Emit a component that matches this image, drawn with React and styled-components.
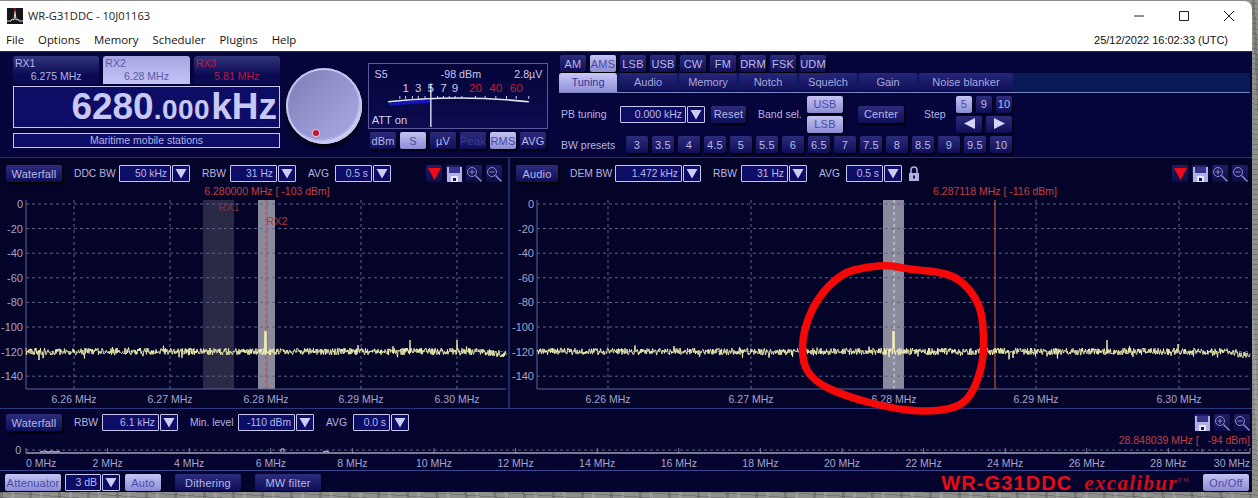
import React from "react";
import styled, { createGlobalStyle, css } from "styled-components";

const GlobalStyle = createGlobalStyle`
  html, body { margin: 0; padding: 0; background: #8b8b88; }
  body { font-family: "Liberation Sans", Arial, sans-serif; overflow: hidden; }
  * { box-sizing: border-box; }
`;

const modes = ["AM", "AMS", "LSB", "USB", "CW", "FM", "DRM", "FSK", "UDM"];
const tabs = ["Tuning", "Audio", "Memory", "Notch", "Squelch", "Gain", "Noise blanker"];
const presets = ["3", "3.5", "4", "4.5", "5", "5.5", "6", "6.5", "7", "7.5", "8", "8.5", "9", "9.5", "10"];
const menu = ["File", "Options", "Memory", "Scheduler", "Plugins", "Help"];
const levels = [0, -20, -40, -60, -80, -100, -120, -140];

function rng(seed) {
  let s = seed;
  return () => {
    s = (s + 0x6d2b79f5) | 0;
    let t = Math.imul(s ^ (s >>> 15), 1 | s);
    t = (t + Math.imul(t ^ (t >>> 7), 61 | t)) ^ t;
    return ((t ^ (t >>> 14)) >>> 0) / 4294967296;
  };
}

// noise floor at -120 dBm, spikes are [x, y]
function trace(seed, from, to, base, spikes, droop = 0) {
  const r = rng(seed);
  const pts = [];
  for (let x = from; x <= to; x += 0.5) {
    let y = base + (r() - 0.5) * 7 + (r() > 0.93 ? (r() - 0.4) * 9 : 0);
    if (x > to - 25) y += droop * ((x - to + 25) / 25);
    const hit = spikes.find((s) => s[0] === x);
    if (hit) y = hit[1];
    pts.push(`${x},${y.toFixed(1)}`);
  }
  return pts.join(" ");
}

function smooth(p) {
  const mid = (a, b) => [(a[0] + b[0]) / 2, (a[1] + b[1]) / 2];
  const start = mid(p[p.length - 1], p[0]);
  let d = `M${start[0]} ${start[1]}`;
  p.forEach((pt, i) => {
    const m = mid(pt, p[(i + 1) % p.length]);
    d += ` Q${pt[0]} ${pt[1]} ${m[0]} ${m[1]}`;
  });
  return d + "Z";
}

const Page = styled.div`
  position: relative;
  width: 1258px;
  height: 498px;
  overflow: hidden;
  background:
    repeating-linear-gradient(87deg, rgba(40, 40, 40, 0.22) 0 3px, transparent 3px 11px, rgba(220, 220, 220, 0.18) 11px 14px, transparent 14px 29px),
    repeating-linear-gradient(4deg, rgba(30, 30, 30, 0.2) 0 1px, transparent 1px 5px),
    #8f8f8c;
`;

const Win = styled.div`
  position: relative;
  width: 1252px;
  height: 492px;
  display: flex;
  flex-direction: column;
  border-top: 1px solid #8c8c8c;
  border-top-right-radius: 8px;
  overflow: hidden;
  background: #fff;
`;

const TitleBar = styled.div`
  height: 27px;
  display: flex;
  align-items: center;
  padding: 2px 0 0 7px;
  font-family: "Open Sans", sans-serif;
  font-size: 11.2px;
  color: #222;
`;

const TitleText = styled.span`
  margin-left: 5px;
`;

const WinControls = styled.div`
  margin-left: auto;
  margin-right: 13px;
  display: flex;
  gap: 25px;
  color: #222;
`;

const MenuBar = styled.div`
  height: 23px;
  display: flex;
  align-items: center;
  padding: 0 24px 0 6px;
  font-family: "Open Sans", sans-serif;
  font-size: 11.4px;
  color: #111;
  gap: 14px;
`;

const Clock = styled.span`
  margin-left: auto;
  font-family: "Liberation Sans", sans-serif;
  font-size: 11px;
`;

const Body = styled.div`
  flex: 1;
  background: #04042e;
  color: #b4b4e4;
  font-size: 10.5px;
  display: flex;
  flex-direction: column;
  border-top: 1px solid #24246a;
`;

const TopPanel = styled.div`
  height: 106px;
  display: flex;
  background: #05053c;
  border-bottom: 1px solid #22307a;
`;

const RxColumn = styled.div`
  width: 267px;
  margin: 4px 0 0 13px;
  display: flex;
  flex-direction: column;
`;

const RxRow = styled.div`
  display: flex;
  gap: 4px;
  height: 28px;
`;

const rxTabColors = {
  on: css`
    background: linear-gradient(#a6a6e4, #c4c4f6);
    color: #5a5aa8;
  `,
  off: css`
    background: linear-gradient(#33337c, #0a0a52 70%);
    color: #b4b4e4;
  `,
  muted: css`
    background: linear-gradient(#33337c, #0a0a52 70%);
    color: #c8123a;
  `,
};

const RxTab = styled.div`
  flex: 1;
  border-radius: 3px 3px 0 0;
  padding: 1px 2px;
  display: flex;
  flex-direction: column;
  font-size: 10.5px;
  line-height: 13px;
  ${(p) => rxTabColors[p.$kind]}
`;

const RxFreq = styled.span`
  text-align: center;
`;

const FreqBox = styled.div`
  height: 42px;
  margin-top: 2px;
  border: 1px solid #c6c6f0;
  background: #0d0d66;
  color: #c8c8f4;
  font-weight: 700;
  display: flex;
  justify-content: flex-end;
  align-items: baseline;
  padding-right: 2px;
  line-height: 40px;
`;

const FreqBig = styled.span`
  font-size: 37px;
`;

const FreqSmall = styled.span`
  font-size: 28px;
  letter-spacing: 0.5px;
  margin-right: 1px;
`;

const StationBox = styled.div`
  height: 15px;
  margin-top: 5px;
  border: 1px solid #c6c6f0;
  background: #0d0d66;
  color: #b4b4e4;
  font-size: 10.5px;
  line-height: 13px;
  text-align: center;
`;

const Knob = styled.div`
  position: relative;
  flex: none;
  width: 76px;
  height: 76px;
  margin: 16px 0 0 6px;
  border-radius: 50%;
  background: linear-gradient(135deg, #7c7cb6, #9e9ed8 70%, #aaaae4);
  box-shadow: inset 0 0 0 2px #c4c4f0, inset -2px -3px 3px #e0e0ff, 0 3px 5px #000;
`;

const KnobDot = styled.span`
  position: absolute;
  left: 27px;
  top: 62px;
  width: 6px;
  height: 6px;
  border-radius: 50%;
  background: #c01838;
  box-shadow: 0 0 0 1px #e8b8d0;
`;

const MeterColumn = styled.div`
  width: 180px;
  margin: 11px 0 0 6px;
  display: flex;
  flex-direction: column;
`;

const MeterFace = styled.svg`
  display: block;
  width: 180px;
  height: 66px;
  border: 1px solid #5a5a9c;
  background: linear-gradient(#04043a, #0c0c50);
  font-family: "Liberation Sans", sans-serif;
`;

const MeterButtons = styled.div`
  display: flex;
  gap: 4px;
  margin: 3px 0 0 2px;
`;

const Btn = styled.button`
  appearance: none;
  flex: none;
  width: ${(p) => p.$w || 26}px;
  height: ${(p) => p.$h || 17}px;
  padding: 0;
  border: 0;
  border-radius: 2px;
  font: inherit;
  font-size: 11px;
  letter-spacing: 0.2px;
  white-space: nowrap;
  color: #b8b8e8;
  background: linear-gradient(#2c2c7c, #0e0e58);
  box-shadow: 1px 2px 2px #000;
  ${(p) =>
    p.$on &&
    css`
      color: #4a4aa4;
      background: linear-gradient(#c4c4f4, #8c8cd4);
    `}
  ${(p) =>
    p.$faint &&
    css`
      color: #3c3c8c;
    `}
`;

const ControlColumn = styled.div`
  flex: 1;
  margin: 3px 2px 0 11px;
  display: flex;
  flex-direction: column;
`;

const ModeRow = styled.div`
  display: flex;
  gap: 4px;
  padding-left: 1px;
`;

const TabBand = styled.div`
  display: flex;
  gap: 2px;
  height: 20px;
  margin-top: 1px;
  background: #0a1a58;
  border-bottom: 1px solid #7c84c0;
`;

const Tab = styled.div`
  width: ${(p) => p.$w}px;
  border-radius: 3px 3px 0 0;
  text-align: center;
  font-size: 11px;
  line-height: 19px;
  color: #a8a8dc;
  background: linear-gradient(#26267a, #0e0e56);
  ${(p) =>
    p.$on &&
    css`
      color: #34349a;
      background: linear-gradient(#c8c8f6, #9090d8);
    `}
`;

const TuneRow = styled.div`
  display: flex;
  align-items: center;
  height: 36px;
  margin-top: 3px;
  padding-left: 2px;
`;

const Label = styled.span`
  flex: none;
  width: ${(p) => p.$w}px;
  margin-left: ${(p) => p.$ml || 0}px;
  white-space: nowrap;
`;

const Field = styled.div`
  flex: none;
  width: ${(p) => p.$w}px;
  height: 17px;
  border: 1px solid #c6c6f0;
  border-radius: 1px;
  background: #0d0d66;
  color: #b8b8e8;
  line-height: 15px;
  text-align: right;
  white-space: nowrap;
  padding-right: 3px;
`;

const ArrowBox = styled.div`
  flex: none;
  width: 18px;
  height: 17px;
  margin-left: 1px;
  border: 1px solid #c6c6f0;
  border-radius: 1px;
  background: #0d0d66;
  display: flex;
  align-items: center;
  justify-content: center;
`;

const Spaced = styled.div`
  margin-left: ${(p) => p.$ml}px;
`;

const BandStack = styled.div`
  display: flex;
  flex-direction: column;
  gap: 3px;
`;

const StepGrid = styled.div`
  width: 56px;
  display: flex;
  flex-wrap: wrap;
  gap: 3px 4px;
`;

const PresetRow = styled.div`
  display: flex;
  align-items: center;
  gap: 4px;
  height: 17px;
  margin-top: 4px;
  padding-left: 2px;
`;

const SpectrumRow = styled.div`
  height: 250px;
  display: flex;
`;

const SpectrumPanel = styled.div`
  width: ${(p) => p.$w}px;
  flex: none;
  display: flex;
  flex-direction: column;
  background: #040428;
  ${(p) => p.$divided && "border-left: 2px solid #1c2a6c;"}
`;

const Toolbar = styled.div`
  display: flex;
  align-items: center;
  height: 17px;
  margin-top: ${(p) => p.$top}px;
  padding: 0 ${(p) => p.$pr || 6}px 0 6px;
  gap: 12px;
  font-size: 10.3px;
`;

const Group = styled.div`
  display: flex;
  align-items: center;
`;

const LabelGap = styled(Label)`
  margin-right: 4px;
`;

const Tools = styled.div`
  margin-left: auto;
  display: flex;
  gap: 4px;
`;

const Tool = styled.div`
  width: 16px;
  height: 17px;
  display: flex;
  align-items: center;
  justify-content: center;
  background: linear-gradient(#1e1e68, #0c0c48);
  border-radius: 2px;
`;

const Lock = styled.div`
  margin-left: -6px;
  display: flex;
`;

const Chart = styled.svg`
  display: block;
  margin-top: ${(p) => p.$top}px;
  font-family: "Liberation Sans", sans-serif;
  text {
    white-space: pre;
  }
`;

const BottomPanel = styled.div`
  height: 62px;
  display: flex;
  flex-direction: column;
  background: #04042e;
  border-top: 1px solid #2a3880;
`;

const Footer = styled.div`
  flex: 1;
  display: flex;
  align-items: flex-start;
  padding: 3px 3px 0 5px;
  background: #04042e;
  border-top: 1px solid #3a4690;
`;

const Logo = styled.span`
  margin-left: auto;
  color: #e80c18;
  font-size: 20px;
  line-height: 18px;
  font-weight: 700;
  letter-spacing: 1.1px;
  white-space: nowrap;
`;

const LogoScript = styled.span`
  flex: none;
  margin: 0 13px 0 12px;
  color: #d00c18;
  font-family: "Liberation Serif", serif;
  font-size: 21px;
  line-height: 18px;
  font-style: italic;
  font-weight: 700;
  letter-spacing: 1.3px;
  white-space: nowrap;
`;

const Trade = styled.sup`
  font-size: 6px;
  font-style: normal;
  color: #802040;
  vertical-align: 8px;
  line-height: 0;
`;

const Scribble = styled.svg`
  position: absolute;
  left: 0;
  top: 0;
  width: 1252px;
  height: 492px;
  pointer-events: none;
`;

const DownArrow = () => (
  <svg width="12" height="11" viewBox="0 0 12 11">
    <path d="M0.5 1h11L6 10.5z" fill="#ccccf6" />
  </svg>
);

const RedDown = () => (
  <svg width="13" height="12" viewBox="0 0 13 12">
    <path d="M0 0h13L6.5 12z" fill="#f20a14" />
  </svg>
);

const Floppy = () => (
  <svg width="15" height="16" viewBox="0 0 15 16">
    <path d="M0 1h15v15H0z" fill="#b0b0e4" />
    <path d="M2 1h11v6H2z" fill="#343488" />
    <path d="M4 10h7v6H4z" fill="#e8e8ff" />
    <path d="M6 12h3v3H6z" fill="#14145a" />
  </svg>
);

const Zoom = ({ plus }) => (
  <svg width="16" height="16" viewBox="0 0 16 16" fill="none" stroke="#8c8cc8" strokeWidth="1">
    <circle cx="6" cy="6" r="4.5" />
    <path d="M3.5 6h5" />
    {plus && <path d="M6 3.5v5" />}
    <path d="M9.5 9.5L15.5 15.5" strokeWidth="1.4" />
  </svg>
);

const Padlock = () => (
  <svg width="12" height="16" viewBox="0 0 12 16">
    <path d="M3 7V4a3 3 0 0 1 6 0v3" fill="none" stroke="#b0b0e4" strokeWidth="1.6" />
    <path d="M1 7h10v8H1z" fill="#b0b0e4" />
    <path d="M5 9.5h2v3H5z" fill="#14145a" />
  </svg>
);

const WindowGlyph = ({ d }) => (
  <svg width="20" height="12" viewBox="0 0 20 12" fill="none" stroke="#222" strokeWidth="1">
    <path d={d} />
  </svg>
);

const FieldArrow = ({ w, value }) => (
  <>
    <Field $w={w}>{value}</Field>
    <ArrowBox>
      <DownArrow />
    </ArrowBox>
  </>
);

const Setting = ({ label, labelW, w, value }) => (
  <Group>
    <LabelGap $w={labelW}>{label}</LabelGap>
    <FieldArrow w={w} value={value} />
  </Group>
);

const ToolIcons = ({ red }) => (
  <Tools>
    {red && (
      <Tool>
        <RedDown />
      </Tool>
    )}
    <Tool>
      <Floppy />
    </Tool>
    <Tool>
      <Zoom plus />
    </Tool>
    <Tool>
      <Zoom />
    </Tool>
  </Tools>
);

const Meter = () => (
  <MeterFace viewBox="0 0 180 66">
    <text x="4" y="14" fontSize="11" fill="#c8c8f0">S5</text>
    <text x="93" y="14" fontSize="11" fill="#c8c8f0" textAnchor="middle">-98 dBm</text>
    <text x="177" y="14" fontSize="11" fill="#c8c8f0" textAnchor="end">2.8µV</text>
    {[["1", 36], ["3", 49], ["5", 62], ["7", 75], ["9", 87]].map(([t, x]) => (
      <text key={t} x={x} y="29" fontSize="12" fill="#c8c8f0" textAnchor="middle">{t}</text>
    ))}
    {[["20", 108], ["40", 129], ["60", 150]].map(([t, x]) => (
      <text key={t} x={x} y="29" fontSize="12" fill="#d01830" textAnchor="middle">{t}</text>
    ))}
    <path d="M18 39Q90 31 163 39" fill="none" stroke="#e4e4f4" strokeWidth="1.6" />
    <path d="M18 40.5Q40 37 62 36.5L62 40Q40 41 20 43z" fill="#1414c0" />
    {[30, 36, 43, 49, 56, 69, 75, 81, 87, 94, 108, 118, 129, 140, 150, 163].map((x) => (
      <path key={x} d={`M${x} 33v3`} stroke="#d8d8f0" strokeWidth="1" />
    ))}
    <path d="M62 20V65" stroke="#e8e8f8" strokeWidth="1.4" />
    <text x="1" y="62" fontSize="11.5" fill="#d0d0f0">ATT on</text>
  </MeterFace>
);

const Spectrum = ({ width, left, right, ticks, bands, line, cursorX, cursorText, seed, spikes, marks, droop }) => {
  const top = 16;
  const bottom = 205;
  const levelY = (i) => 20 + i * 24.6;
  return (
    <Chart width={width} height={224} $top={2}>
      <text x={cursorX} y="11" fontSize="10.5" fill="#c04044" textAnchor="middle">{cursorText}</text>
      {bands.map((b) => (
        <rect key={b.x} x={b.x} y={top} width={b.w} height={bottom - top} fill={b.fill} />
      ))}
      {levels.map((lv, i) => (
        <g key={lv}>
          <path d={`M${left} ${levelY(i)}H${right}`} stroke="#5c6488" strokeDasharray="3 3" />
          <text x={left - 3} y={levelY(i) + 4} fontSize="11" fill="#a4a4cc" textAnchor="end">{lv}</text>
        </g>
      ))}
      {ticks.map((t) => (
        <g key={t.x}>
          <path d={`M${t.x} ${top}V${bottom}`} stroke={t.center ? "#dcdce8" : "#5c6488"} strokeDasharray="3 3" />
          <text x={t.x} y="219" fontSize="10.5" fill="#a4a4d0" textAnchor="middle">{t.label}</text>
        </g>
      ))}
      <path d={`M${left} ${top}V${bottom}H${right}`} fill="none" stroke="#5a64a0" />
      {line && <path d={`M${line.x} ${top}V${bottom}`} stroke={line.color} />}
      {marks}
      <polyline points={trace(seed, left, right, 167.5, spikes, droop)} fill="none" stroke="#f6f6b4" strokeWidth="0.9" />
    </Chart>
  );
};

const hfTicks = Array.from({ length: 16 }, (_, i) => 26 + i * 81.6);

const Wideband = () => (
  <Chart width={1252} height={36} $top={3}>
    <text x="1250" y="10" fontSize="10.5" fill="#c04044" textAnchor="end">28.848039 MHz [   -94 dBm]</text>
    <text x="21" y="20" fontSize="10.5" fill="#a4a4cc" textAnchor="end">0</text>
    <path d="M26 16H1250" stroke="#5c6488" strokeDasharray="3 3" />
    {hfTicks.map((x, i) => (
      <g key={x}>
        <path d={`M${x} 14v5`} stroke="#6c74a0" />
        <text
          x={i === 0 ? 26 : i === 15 ? 1250 : x}
          y="33"
          fontSize="10.5"
          fill="#a4a4d0"
          textAnchor={i === 0 ? "start" : i === 15 ? "end" : "middle"}
        >
          {i * 2} MHz
        </text>
      </g>
    ))}
    <path d="M1202 15v3" stroke="#c06040" />
    <path d="M26 19H1250" stroke="#ececf4" strokeWidth="1.2" />
    <path d="M40 18l4 -1 4 1 4 -1 4 1 4 -1M281 18v-3h3v3M323 18l3 -1 3 1" fill="none" stroke="#d0d0e0" />
  </Chart>
);

const scribble = [
  [890, 264], [906, 268], [950, 272], [969, 287], [981, 307], [984, 335], [983, 362], [973, 392],
  [958, 407], [925, 411], [890, 407], [845, 395], [815, 381], [802, 362], [803, 330], [817, 297], [842, 272], [866, 266],
];

export default function App() {
  return (
    <>
      <GlobalStyle />
      <Page>
        <Win>
          <TitleBar>
            <svg width="16" height="16" viewBox="0 0 16 16">
              <path d="M0 0h16v16H0z" fill="#14141c" />
              <path d="M0 13h4l1-2 2 1 1-9 1 9 2-1 1 2h4" fill="none" stroke="#d8d8d0" strokeWidth="1" />
              <path d="M8 0v5" stroke="#c82020" strokeWidth="1" />
            </svg>
            <TitleText>WR-G31DDC - 10J01163</TitleText>
            <WinControls>
              <WindowGlyph d="M5 6h10" />
              <WindowGlyph d="M5.5 1.5h9v9h-9z" />
              <WindowGlyph d="M5 1l10 10M15 1L5 11" />
            </WinControls>
          </TitleBar>
          <MenuBar>
            {menu.map((m) => (
              <span key={m}>{m}</span>
            ))}
            <Clock>25/12/2022 16:02:33 (UTC)</Clock>
          </MenuBar>
          <Body>
            <TopPanel>
              <RxColumn>
                <RxRow>
                  <RxTab $kind="off">
                    RX1
                    <RxFreq>6.275 MHz</RxFreq>
                  </RxTab>
                  <RxTab $kind="on">
                    RX2
                    <RxFreq>6.28 MHz</RxFreq>
                  </RxTab>
                  <RxTab $kind="muted">
                    RX3
                    <RxFreq>5.81 MHz</RxFreq>
                  </RxTab>
                </RxRow>
                <FreqBox>
                  <FreqBig>6280</FreqBig>
                  <FreqSmall>.000</FreqSmall>
                  <FreqBig>kHz</FreqBig>
                </FreqBox>
                <StationBox>Maritime mobile stations</StationBox>
              </RxColumn>
              <Knob>
                <KnobDot />
              </Knob>
              <MeterColumn>
                <Meter />
                <MeterButtons>
                  <Btn>dBm</Btn>
                  <Btn $on>S</Btn>
                  <Btn>µV</Btn>
                  <Btn $faint>Peak</Btn>
                  <Btn $on>RMS</Btn>
                  <Btn>AVG</Btn>
                </MeterButtons>
              </MeterColumn>
              <ControlColumn>
                <ModeRow>
                  {modes.map((m) => (
                    <Btn key={m} $on={m === "AMS"}>
                      {m}
                    </Btn>
                  ))}
                </ModeRow>
                <TabBand>
                  {tabs.map((t, i) => (
                    <Tab key={t} $w={i === 6 ? 94 : 58} $on={i === 0}>
                      {t}
                    </Tab>
                  ))}
                </TabBand>
                <TuneRow>
                  <Label $w={59}>PB tuning</Label>
                  <FieldArrow w={66} value="0.000 kHz" />
                  <Spaced $ml={6}>
                    <Btn $w={35}>Reset</Btn>
                  </Spaced>
                  <Label $w={49} $ml={12}>
                    Band sel.
                  </Label>
                  <BandStack>
                    <Btn $w={36} $on>
                      USB
                    </Btn>
                    <Btn $w={36} $on>
                      LSB
                    </Btn>
                  </BandStack>
                  <Spaced $ml={15}>
                    <Btn $w={46}>Center</Btn>
                  </Spaced>
                  <Label $w={32} $ml={20}>
                    Step
                  </Label>
                  <StepGrid>
                    <Btn $w={16} $on>
                      5
                    </Btn>
                    <Btn $w={16}>9</Btn>
                    <Btn $w={16}>10</Btn>
                    <Btn $w={26}>
                      <svg width="11" height="11" viewBox="0 0 11 11">
                        <path d="M11 0v11L0 5.5z" fill="#d4d4fa" />
                      </svg>
                    </Btn>
                    <Btn $w={26}>
                      <svg width="11" height="11" viewBox="0 0 11 11">
                        <path d="M0 0v11L11 5.5z" fill="#d4d4fa" />
                      </svg>
                    </Btn>
                  </StepGrid>
                </TuneRow>
                <PresetRow>
                  <Label $w={61}>BW presets</Label>
                  {presets.map((p) => (
                    <Btn key={p} $w={22}>
                      {p}
                    </Btn>
                  ))}
                </PresetRow>
              </ControlColumn>
            </TopPanel>

            <SpectrumRow>
              <SpectrumPanel $w={508}>
                <Toolbar $top={7}>
                  <Btn $w={56}>Waterfall</Btn>
                  <Setting label="DDC BW" labelW={41} w={52} value="50 kHz" />
                  <Setting label="RBW" labelW={24} w={47} value="31 Hz" />
                  <Setting label="AVG" labelW={23} w={37} value="0.5 s" />
                  <ToolIcons red />
                </Toolbar>
                <Spectrum
                  width={508}
                  left={26}
                  right={506}
                  cursorX={267}
                  cursorText="6.280000 MHz [ -103 dBm]"
                  bands={[
                    { x: 203, w: 31, fill: "#2a2a46" },
                    { x: 258, w: 17, fill: "#8a8a9c" },
                  ]}
                  line={{ x: 267, color: "#c05a50" }}
                  ticks={[
                    { x: 74, label: "6.26 MHz" },
                    { x: 170, label: "6.27 MHz" },
                    { x: 266, label: "6.28 MHz" },
                    { x: 361, label: "6.29 MHz" },
                    { x: 457, label: "6.30 MHz" },
                  ]}
                  seed={7}
                  spikes={[[39, 176], [265, 147], [266, 147], [410, 156], [457, 156]]}
                  droop={3}
                  marks={
                    <>
                      <text x="229" y="27" fontSize="11" fill="#7a3040" textAnchor="middle">RX1</text>
                      <text x="277" y="41" fontSize="11" fill="#b03c40" textAnchor="middle">RX2</text>
                    </>
                  }
                />
              </SpectrumPanel>
              <SpectrumPanel $w={744} $divided>
                <Toolbar $top={7} $pr={4}>
                  <Btn $w={42}>Audio</Btn>
                  <Setting label="DEM BW" labelW={41} w={67} value="1.472 kHz" />
                  <Setting label="RBW" labelW={24} w={47} value="31 Hz" />
                  <Setting label="AVG" labelW={23} w={37} value="0.5 s" />
                  <Lock>
                    <Padlock />
                  </Lock>
                  <ToolIcons red />
                </Toolbar>
                <Spectrum
                  width={742}
                  left={27}
                  right={740}
                  cursorX={485}
                  cursorText="6.287118 MHz [ -116 dBm]"
                  bands={[{ x: 373, w: 21, fill: "#8a8a9c" }]}
                  line={{ x: 485, color: "#d8683c" }}
                  ticks={[
                    { x: 98, label: "6.26 MHz" },
                    { x: 241, label: "6.27 MHz" },
                    { x: 384, label: "6.28 MHz", center: true },
                    { x: 526, label: "6.29 MHz" },
                    { x: 669, label: "6.30 MHz" },
                  ]}
                  seed={21}
                  spikes={[[383, 147], [384, 147], [597, 156], [668, 160]]}
                  droop={5}
                />
              </SpectrumPanel>
            </SpectrumRow>

            <BottomPanel>
              <Toolbar $top={5} $pr={2}>
                <Btn $w={56}>Waterfall</Btn>
                <Setting label="RBW" labelW={24} w={57} value="6.1 kHz" />
                <Setting label="Min. level" labelW={44} w={57} value="-110 dBm" />
                <Setting label="AVG" labelW={23} w={37} value="0.0 s" />
                <ToolIcons />
              </Toolbar>
              <Wideband />
            </BottomPanel>

            <Footer>
              <Btn $w={56} $on>
                Attenuator
              </Btn>
              <Spaced $ml={4}>
                <Group>
                  <FieldArrow w={36} value="3 dB" />
                </Group>
              </Spaced>
              <Spaced $ml={5}>
                <Btn $w={36} $on>
                  Auto
                </Btn>
              </Spaced>
              <Spaced $ml={14}>
                <Btn $w={66}>Dithering</Btn>
              </Spaced>
              <Spaced $ml={14}>
                <Btn $w={66}>MW filter</Btn>
              </Spaced>
              <Logo>WR-G31DDC</Logo>
              <LogoScript>
                excalibur<Trade>TM</Trade>
              </LogoScript>
              <Btn $w={46} $on>
                On/Off
              </Btn>
            </Footer>
          </Body>
          <Scribble viewBox="0 0 1252 492">
            <path d={smooth(scribble)} fill="none" stroke="#f40808" strokeWidth="7.5" strokeLinejoin="round" />
          </Scribble>
        </Win>
      </Page>
    </>
  );
}
